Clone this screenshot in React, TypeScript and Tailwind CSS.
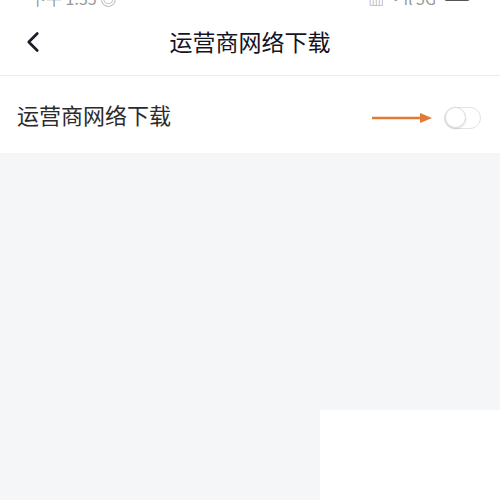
import { ChevronLeft } from "lucide-react";

export default function App() {
  return (
    <div
      className="flex h-[500px] w-[500px] flex-col overflow-hidden bg-[#f5f6f8]"
      style={{ fontFamily: '"Noto Sans CJK SC", "Noto Sans", sans-serif' }}
    >
      {/* status bar, mostly cut off */}
      <div className="h-[8px] overflow-hidden bg-white">
        <div className="-mt-[10px] flex items-center justify-between px-[30px] text-[16px] leading-[16px] text-[#999999]">
          <span>下午 1:35 ◎</span>
          <span className="flex items-center gap-2">
            <span>▥ ·ıl 5G</span>
            <span className="h-[6px] w-[26px] rounded-sm bg-[#555]" />
          </span>
        </div>
      </div>

      <header className="relative flex h-[68px] items-center justify-center border-b border-[#ececef] bg-white">
        <ChevronLeft className="absolute left-[16px] top-[17px] h-[34px] w-[34px] text-[#1d1d28]" strokeWidth={1.9} />
        <h1 className="text-[23px] font-normal text-[#14141f]">运营商网络下载</h1>
      </header>

      <div className="flex h-[77px] items-center justify-between bg-white pl-[17px] pr-[19px]">
        <span className="text-[22px] text-[#2b2b2b]">运营商网络下载</span>
        <div className="mt-[6px] flex items-center gap-[12px]">
          <svg width="60" height="12" viewBox="0 0 60 12">
            <line x1="0" y1="6" x2="50" y2="6" stroke="#e07a35" strokeWidth="2.5" />
            <polygon points="48,1 60,6 48,11" fill="#e07a35" />
          </svg>
          <div className="flex h-[22px] w-[37px] items-center rounded-full border border-[#e2e2e2] bg-white">
            <div className="h-[21px] w-[21px] rounded-full border border-[#dcdcdc] bg-white shadow-[0_1px_2px_rgba(0,0,0,0.12)]" />
          </div>
        </div>
      </div>

      <div className="flex flex-1 flex-col justify-end">
        <div className="ml-[320px] h-[90px] bg-white" />
      </div>
    </div>
  );
}
